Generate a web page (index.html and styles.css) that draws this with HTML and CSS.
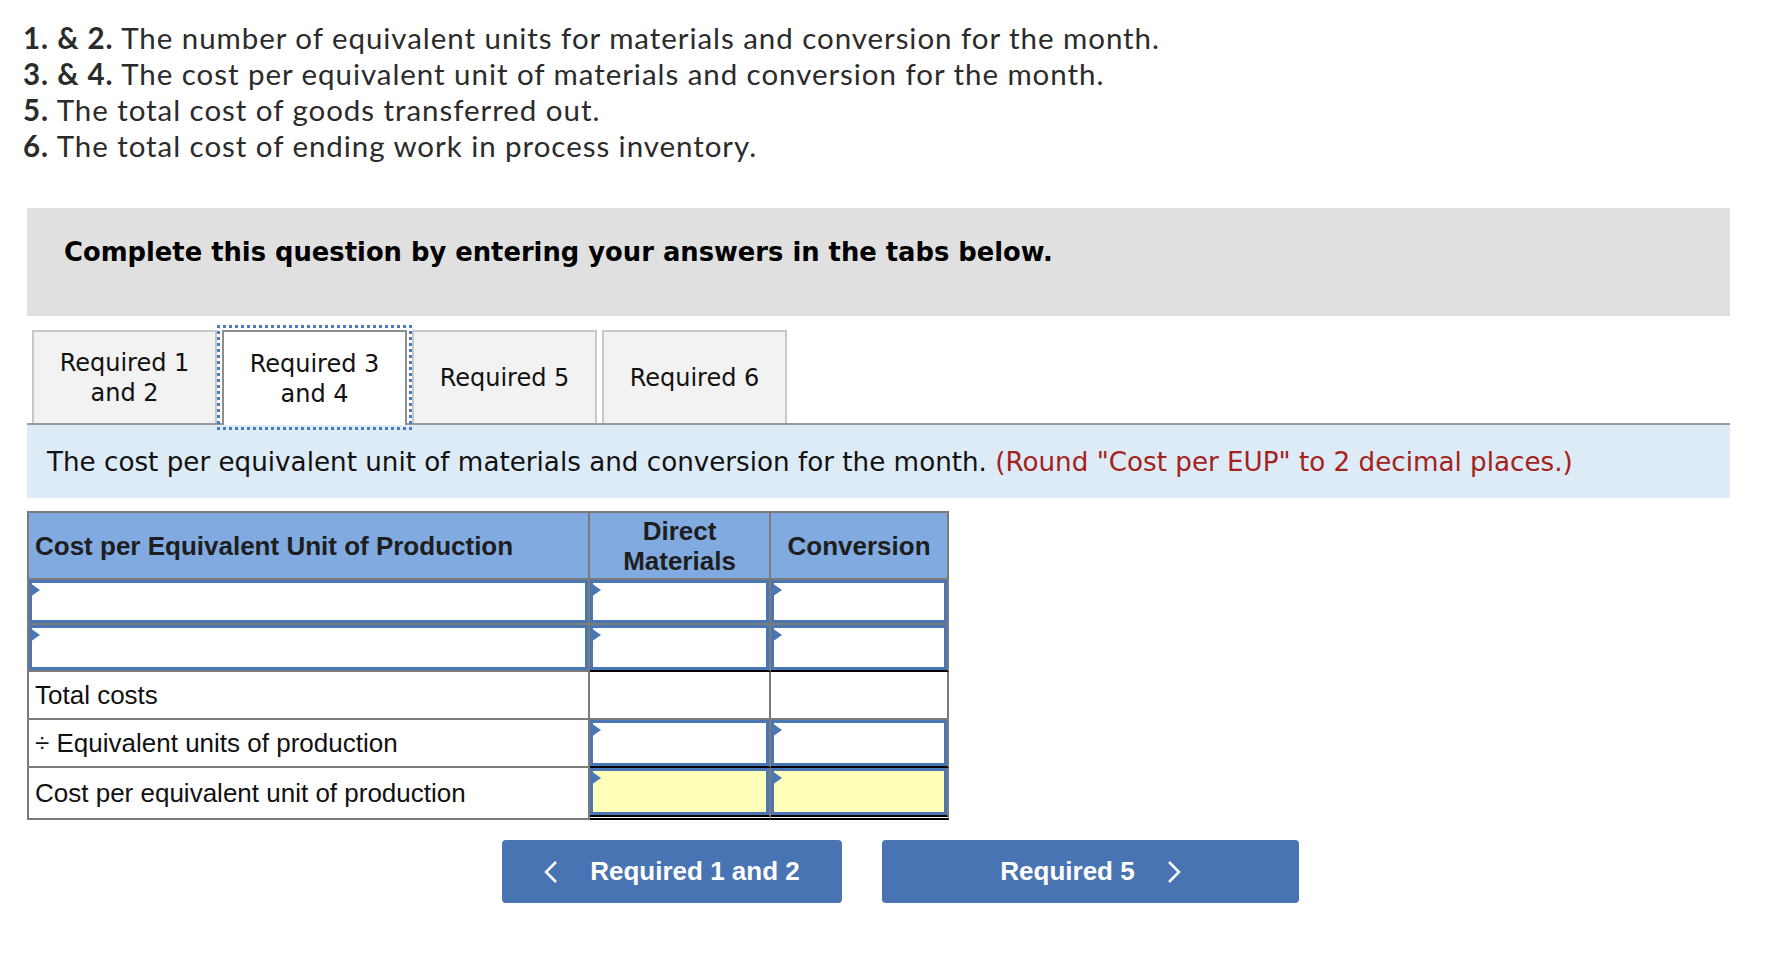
FILE: index.html
```html
<!DOCTYPE html>
<html lang="en">
<head>
<meta charset="utf-8">
<title>Cost per Equivalent Unit</title>
<link rel="stylesheet" href="styles.css">
</head>
<body>
<div class="prompt">
  <p><b>1. &amp; 2.</b> The number of equivalent units for materials and conversion for the month.</p>
  <p><b>3. &amp; 4.</b> The cost per equivalent unit of materials and conversion for the month.</p>
  <p><b>5.</b> The total cost of goods transferred out.</p>
  <p><b>6.</b> The total cost of ending work in process inventory.</p>
</div>
<div class="q">
  <div class="banner"><h2>Complete this question by entering your answers in the tabs below.</h2></div>
  <div class="tabs">
    <div class="tab">Required 1<br>and 2</div>
    <div class="tab active">Required 3<br>and 4</div>
    <div class="tab">Required 5</div>
    <div class="tab">Required 6</div>
  </div>
  <div class="instr"><span>The cost per equivalent unit of materials and conversion for the month. <span class="red">(Round "Cost per EUP" to 2 decimal places.)</span></span></div>
  <div class="grid">
    <div class="cell hd">Cost per Equivalent Unit of Production</div>
    <div class="cell hd c">Direct<br>Materials</div>
    <div class="cell hd c">Conversion</div>

    <div class="cell inp"><div class="box"></div></div>
    <div class="cell inp"><div class="box"></div></div>
    <div class="cell inp"><div class="box"></div></div>

    <div class="cell inp"><div class="box"></div></div>
    <div class="cell inp ul"><div class="box"></div></div>
    <div class="cell inp ul"><div class="box"></div></div>

    <div class="cell lbl">Total costs</div>
    <div class="cell"></div>
    <div class="cell"></div>

    <div class="cell lbl">÷ Equivalent units of production</div>
    <div class="cell inp ul"><div class="box"></div></div>
    <div class="cell inp ul"><div class="box"></div></div>

    <div class="cell lbl">Cost per equivalent unit of production</div>
    <div class="cell inp dbl"><div class="box yel"></div></div>
    <div class="cell inp dbl"><div class="box yel"></div></div>
  </div>
  <div class="nav">
    <div class="btn prev"><svg class="chev" width="14" height="24" viewBox="0 0 14 24"><polyline points="12,2 2,12 12,22" fill="none" stroke="#fff" stroke-width="2.5"/></svg><span>Required 1 and 2</span></div>
    <div class="btn next"><span>Required 5</span><svg class="chev" width="14" height="24" viewBox="0 0 14 24"><polyline points="2,2 12,12 2,22" fill="none" stroke="#fff" stroke-width="2.5"/></svg></div>
  </div>
</div>
</body>
</html>
```
FILE: styles.css
```css
body {
  margin: 0;
  background: #fff;
}

.prompt {
  padding: 20px 0 0 23px;
  font-family: Lato, "Open Sans", sans-serif;
  font-size: 29.5px;
  letter-spacing: 0.95px;
  line-height: 36px;
  color: #2b2b2b;
}

.prompt p {
  margin: 0;
}

.prompt b {
  font-weight: 700;
}

.q {
  margin: 44px 0 0 27px;
  width: 1703px;
}

.banner {
  background: #e0e0e0;
  padding: 30px 37px 50px;
}

.banner h2 {
  margin: 0;
  font: bold 25.8px/28px "DejaVu Sans", Verdana, sans-serif;
  color: #000;
}

.tabs {
  display: flex;
  align-items: flex-end;
  gap: 5px;
  padding-left: 5px;
  margin-top: 14px;
  border-bottom: 2px solid #9a9a9a;
}

.tab {
  box-sizing: border-box;
  width: 185px;
  height: 93px;
  display: flex;
  align-items: center;
  justify-content: center;
  text-align: center;
  background: #f2f2f2;
  border: 2px solid #c8c8c8;
  border-bottom: none;
  font: 24px/30px "DejaVu Sans", Verdana, sans-serif;
  color: #111;
}

.tab.active {
  background: #fff;
  border-color: #8e8e8e;
  height: 95px;
  margin-bottom: -2px;
  outline: 3px dotted #4a7bc0;
  outline-offset: 2px;
  position: relative;
  z-index: 1;
}

.instr {
  background: #ddebf7;
  height: 73px;
  padding-left: 20px;
  display: flex;
  align-items: center;
  font: 26.2px "DejaVu Sans", Verdana, sans-serif;
  color: #111;
}

.red {
  color: #a4211c;
}

.grid {
  margin-top: 13px;
  display: grid;
  grid-template-columns: 561px 181px 178px;
  grid-template-rows: 67px 45px 47px 48px 48px 52px;
  width: max-content;
  border-left: 2px solid #7b7b7b;
  border-top: 2px solid #7b7b7b;
}

.cell {
  box-sizing: border-box;
  border-right: 2px solid #7b7b7b;
  border-bottom: 2px solid #7b7b7b;
  display: flex;
  align-items: center;
}

.hd {
  background: #80aae0;
  padding-left: 6px;
  font: bold 26px/30px "Liberation Sans", Arial, sans-serif;
  color: #1e1e1e;
}

.hd.c {
  padding-left: 0;
  justify-content: center;
  text-align: center;
}

.lbl {
  padding-left: 6px;
  font: 26px "Liberation Sans", Arial, sans-serif;
  color: #111;
}

.inp {
  align-items: stretch;
}

.box {
  flex: 1;
  border: 3px solid #4a76b4;
  background: #fff;
  position: relative;
}

.box.yel {
  background: #ffffb9;
}

.box::before {
  content: "";
  position: absolute;
  left: -2px;
  top: 0;
  border-left: 10px solid #4a76b4;
  border-top: 7px solid transparent;
  border-bottom: 7px solid transparent;
}

.ul {
  border-bottom-color: #000;
}

.dbl {
  border-bottom: 5px double #000;
}

.nav {
  display: flex;
  gap: 40px;
  margin-top: 20px;
  padding-left: 475px;
}

.btn {
  box-sizing: border-box;
  height: 63px;
  background: #4874b3;
  border-radius: 4px;
  color: #fff;
  font: bold 26px "Liberation Sans", Arial, sans-serif;
  display: flex;
  align-items: center;
  justify-content: center;
  gap: 32px;
}

.btn.prev {
  width: 340px;
}

.btn.next {
  width: 417px;
}

.chev {
  display: block;
}
```
